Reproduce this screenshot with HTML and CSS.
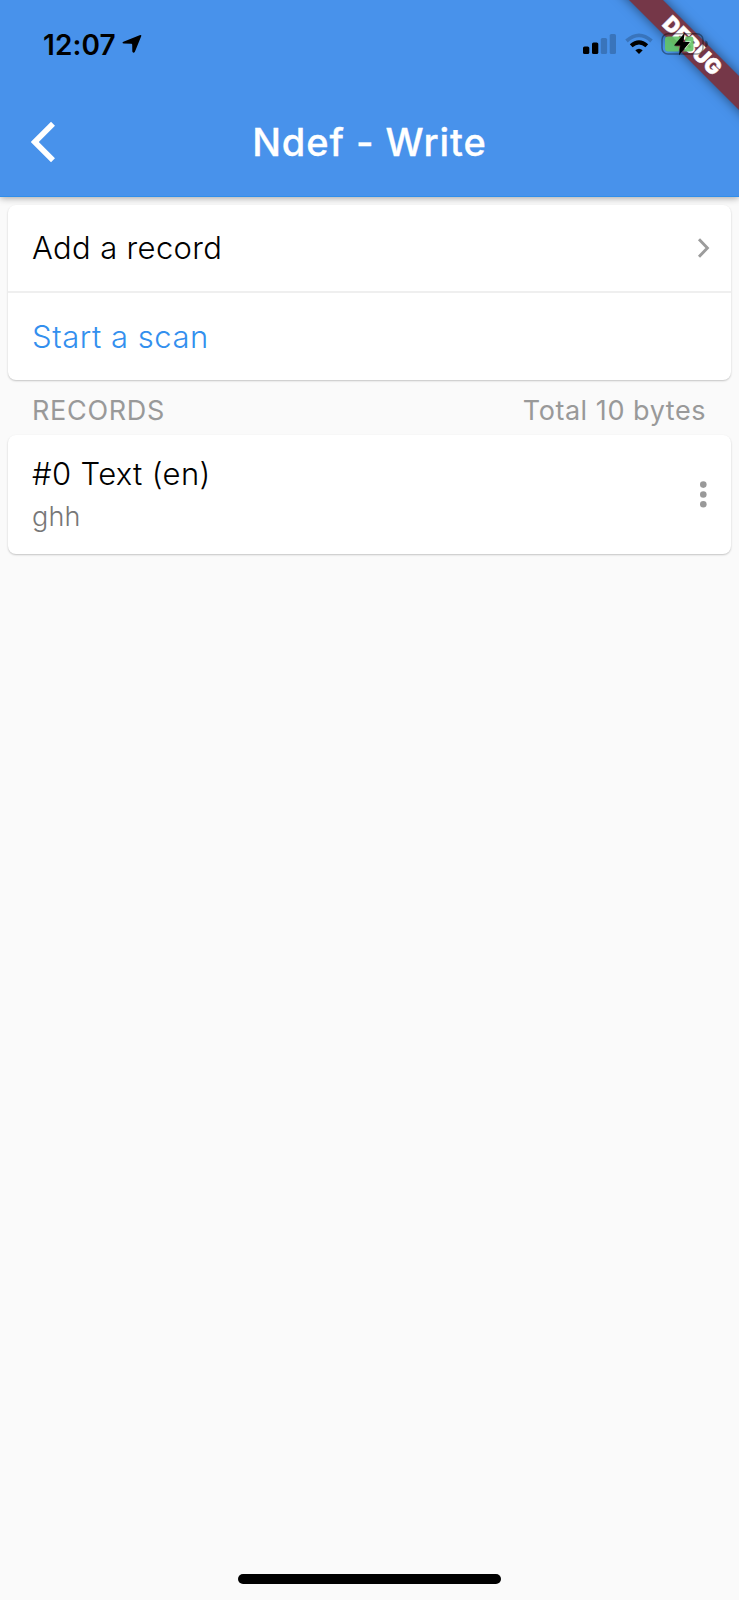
FILE: index.html
```html
<!DOCTYPE html>
<html lang="en">
<head>
<meta charset="utf-8">
<title>Ndef - Write</title>
<link rel="stylesheet" href="styles.css">
</head>
<body>
<div class="screen">
  <header class="header">
    <div class="status">
      <div class="clock">
        <span class="time">12:07</span>
        <svg class="location" width="20" height="20" viewBox="0 0 20 20"><path d="M17.6 1.2 Q19.8.3 19.2 2.3L12.9 17.7Q11.6 20 10.3 17.6L10.2 10.8Q10.1 9.9 9.4 9.8L1.8 9.6Q-.6 8.8 1.4 7.8Z"/></svg>
      </div>
      <div class="indicators">
        <svg width="34" height="22" viewBox="0 0 34 22"><rect x="0" y="13.5" width="6.3" height="7.5" rx="1.6"/><rect x="9" y="9.5" width="6.3" height="11.5" rx="1.6"/><g opacity=".2"><rect x="17.8" y="5" width="6.3" height="16" rx="1.6"/><rect x="26.7" y="1" width="6.3" height="20" rx="1.6"/></g></svg>
        <svg class="wifi" width="28" height="22" viewBox="0 0 28 22"><path d="M14 21L10.3 17.3Q14 14.1 17.7 17.3Z"/><path d="M6.2 12.8Q14 5.8 21.8 12.8" fill="none" stroke="#000" stroke-width="4.1"/><path d="M1.5 8Q14-3.2 26.5 8" fill="none" stroke="#000" stroke-width="3.7" opacity=".2"/></svg>
        <svg class="battery" width="48" height="24" viewBox="0 0 48 24"><rect x="1" y="1.8" width="41" height="20.2" rx="6" fill="none" stroke="#000" stroke-width="1.5" opacity=".38"/><path d="M44.3 8.2Q47 9.3 47 12T44.3 15.8Z" opacity=".4"/><path d="M7 4.4H22L13.5 14.2H18.6L17.7 19.4H7Q4 19.4 4 16.4V7.4Q4 4.4 7 4.4ZM24.5 4.4H29.5Q32.5 4.4 32.5 7.4V16.4Q32.5 19.4 29.5 19.4H22L30 9.4H24Z" fill="#64c466" opacity=".9"/><path d="M23.7 .8L13 13.6H19.3L18 23.2 29 10H22.4Z"/></svg>
      </div>
    </div>
    <div class="nav">
      <svg class="back" width="26" height="42" viewBox="0 0 26 42"><path d="M22 2.8L3.8 21 22 39.2" fill="none" stroke="#fff" stroke-width="5.6"/></svg>
      <h1 class="title">Ndef - Write</h1>
    </div>
  </header>
  <main class="content">
    <section class="card">
      <div class="row row-add"><span class="label">Add a record</span>
        <svg width="13" height="20" viewBox="0 0 13 20"><path d="M2 1.2L10.4 10 2 18.8" fill="none" stroke="#9c9c9c" stroke-width="2.9"/></svg></div>
      <div class="row row-scan"><span class="label scan">Start a scan</span></div>
    </section>
    <div class="summary"><span class="heading">RECORDS</span><span class="total">Total 10 bytes</span></div>
    <section class="card record">
      <div class="record-text"><div class="label record-title">#0 Text (en)</div><div class="value">ghh</div></div>
      <svg class="more" width="8" height="28" viewBox="0 0 8 28" fill="#999"><circle cx="4.3" cy="4.6" r="3.3"/><circle cx="4.3" cy="14.5" r="3.3"/><circle cx="4.3" cy="24.3" r="3.3"/></svg>
    </section>
  </main>
  <div class="home"></div>
  <div class="ribbon-clip"><div class="ribbon">DEBUG</div></div>
</div>
</body>
</html>
```
FILE: styles.css
```css
* { box-sizing: border-box; }
body { margin: 0; font-family: Inter, "Liberation Sans", sans-serif; background: #fafafa; }
.screen { position: relative; width: 739px; height: 1600px; overflow: hidden; display: flex; flex-direction: column; background: #fafafa; }
.header { height: 197px; flex: none; background: #4892eb; border-bottom: 1px solid #308eea; box-shadow: 0 1px 7px rgba(0,0,0,.36); }
.status { height: 88px; display: flex; justify-content: space-between; padding: 33px 30px 0 43px; }
.clock { display: flex; align-items: flex-start; gap: 6px; }
.time { font-size: 28px; font-weight: 600; line-height: 24px; letter-spacing: .1px; }
.location { margin-top: 1px; }
.indicators { display: flex; align-items: flex-start; gap: 8px; position: relative; z-index: 3; }
.battery { margin-top: -1px; }
.nav { height: 108px; display: grid; grid-template-columns: 100px 1fr 100px; align-items: center; }
.back { margin-left: 31px; }
.title { margin: 0; text-align: center; color: #fff; font-size: 38px; line-height: 46px; font-weight: 500; letter-spacing: .95px; -webkit-text-stroke: .3px #fff; }
.content { padding: 8px 8px 0; }
.card { background: #fff; border-radius: 8px; box-shadow: 0 1px 2px rgba(0,0,0,.22); }
.row { display: flex; align-items: center; justify-content: space-between; padding: 0 21px 0 24px; }
.row-add { height: 88px; border-bottom: 2px solid #efefef; }
.row-scan { height: 87px; }
.label { font-size: 31px; line-height: 38px; font-weight: 300; color: #000; letter-spacing: .35px; }
.scan { color: #338fee; letter-spacing: .55px; }
.summary { height: 55px; display: flex; justify-content: space-between; align-items: center; padding: 6px 25px 0 24px; font-size: 27px; color: #999; letter-spacing: .55px; }
.heading { letter-spacing: .7px; }
.record { height: 119px; display: flex; justify-content: space-between; padding: 20px 24px 0; }
.value { font-size: 27px; line-height: 32px; margin-top: 8px; color: #777; font-weight: 300; letter-spacing: .2px; }
.more { margin-top: 25px; }
.home { position: absolute; left: 238px; top: 1574px; width: 263px; height: 10px; border-radius: 5px; background: #000; }
.ribbon-clip { position: absolute; top: 0; right: 0; width: 200px; height: 190px; overflow: hidden; }
.ribbon { position: absolute; left: 43px; top: 34px; width: 220px; height: 24px; transform: rotate(45deg); background: #753748; box-shadow: 0 0 12px rgba(0,0,0,.5); color: #fff; font-size: 21px; line-height: 24px; font-weight: 900; text-align: center; -webkit-text-stroke: .5px #fff; }
```
